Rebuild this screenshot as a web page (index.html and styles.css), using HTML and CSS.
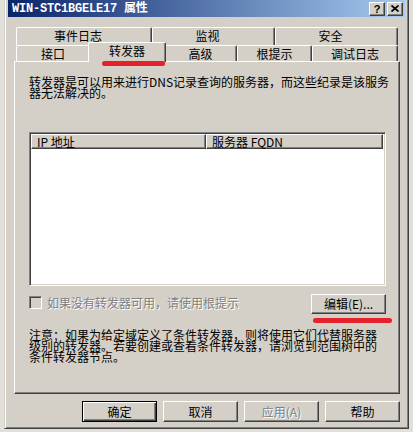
FILE: index.html
```html
<!DOCTYPE html>
<html>
	<head>
		<meta charset="utf-8">
		<title>WIN-STC1BGELE17 属性</title>

		<link rel="stylesheet" href="styles.css">

	</head>

	<body>
		<div id="dialog">
			<div id="titleBar">
				<span class="title">WIN-STC1BGELE17 属性</span>
				<span class="capBtn help">?</span>
				<span class="capBtn">
					<svg width="8" height="7" viewBox="0 0 8 7"><path d="M0.5 0.5 L7.5 6.5 M7.5 0.5 L0.5 6.5" stroke="#000" stroke-width="1.7" fill="none"/></svg>
				</span>
			</div>

			<div id="content">
				<div id="tabs">
					<div class="tabRow back">
						<span class="tab">事件日志</span>
						<span class="tab">监视</span>
						<span class="tab">安全</span>
					</div>
					<div class="tabRow front">
						<span class="tab">接口</span>
						<span class="tab on">转发器</span>
						<span class="tab">高级</span>
						<span class="tab">根提示</span>
						<span class="tab">调试日志</span>
					</div>
					<i class="mark markTab"></i>
				</div>

				<div id="panel">
					<p class="desc">转发器是可以用来进行DNS记录查询的服务器，而这些纪录是该服务器无法解决的。</p>

					<div class="listView">
						<div class="listHead">
							<span class="col colIp">IP 地址</span>
							<span class="col colFqdn">服务器 FQDN</span>
						</div>
						<div class="listBody"></div>
					</div>

					<div class="optRow">
						<label class="check disabled"><span class="box"></span>如果没有转发器可用，请使用根提示</label>
						<span class="btn editBtn">编辑(E)...<i class="mark markEdit"></i></span>
					</div>

					<p class="note">注意：如果为给定域定义了条件转发器，则将使用它们代替服务器级别的转发器。若要创建或查看条件转发器，请浏览到范围树中的条件转发器节点。</p>
				</div>

				<div id="buttons">
					<span class="btn default">确定</span>
					<span class="btn">取消</span>
					<span class="btn disabled">应用(A)</span>
					<span class="btn">帮助</span>
				</div>
			</div>
		</div>
	</body>
</html>
```

FILE: styles.css
```css
* {
	margin: 0;
	padding: 0;
	box-sizing: border-box;
}
body {
	background-color: #e2e0db;
	font-family: "Noto Sans CJK SC", sans-serif;
	font-size: 12px;
	color: #000;
}
#dialog {
	width: 405px;
	height: 433px;
	margin: -4px 0 0 4px;
	background: #d4d0c8;
	border: 1px solid;
	border-color: #d4d0c8 #404040 #404040 #d4d0c8;
	box-shadow: inset 1px 1px #fff, inset -1px -1px #808080;
	padding: 3px;
}
#titleBar {
	height: 17px;
	display: flex;
	align-items: center;
	gap: 2px;
	padding: 0 2px;
	background: linear-gradient(to right, #0a246a, #a6caf0);
}
#titleBar .title {
	flex: 1;
	padding: 1px 0 0 2px;
	color: #fff;
	font-family: "Liberation Mono", "Noto Sans CJK SC", monospace;
	font-weight: bold;
	font-size: 12px;
	letter-spacing: -0.2px;
	line-height: 16px;
}
.capBtn {
	width: 16px;
	height: 14px;
	display: flex;
	align-items: center;
	justify-content: center;
	background: #d4d0c8;
	border: 1px solid;
	border-color: #fff #404040 #404040 #fff;
	box-shadow: inset -1px -1px #808080;
}
.capBtn.help {
	font-family: "Liberation Sans", sans-serif;
	font-weight: bold;
	font-size: 11px;
	line-height: 12px;
}

#content {
	padding: 10px 5px 0 6px;
}

/* tabs */
#tabs {
	position: relative;
}
.tabRow {
	display: grid;
	margin: 0 2px;
}
.tabRow.back {
	height: 18px;
	grid-template-columns: 136px 123px 123px;
}
.tabRow.front {
	height: 16px;
	grid-template-columns: 74px 74px 73px 75px 86px;
}
.tab {
	display: flex;
	align-items: center;
	justify-content: center;
	background: #d4d0c8;
	border-top: 1px solid #fff;
	border-left: 1px solid #fff;
	border-right: 1px solid #404040;
	border-radius: 2px 2px 0 0;
	box-shadow: inset -1px 0 #808080;
	line-height: 14px;
}
.tabRow.back .tab {
	padding-right: 12px;
	padding-bottom: 1px;
}
.tab.on {
	margin: -3px -2px -1px;
	padding-bottom: 3px;
	z-index: 2;
}
.mark {
	position: absolute;
	display: block;
	height: 5px;
	border-radius: 3px;
	background: #e3222b;
}
.markTab {
	left: 88px;
	top: 34px;
	width: 63px;
	z-index: 3;
}

/* page */
#panel {
	height: 333px;
	padding: 14px 13px 0 14px;
	border: 1px solid;
	border-color: #fff #404040 #404040 #fff;
	box-shadow: inset -1px -1px #808080;
}
.desc {
	width: 366px;
	line-height: 11px;
}
.listView {
	margin-top: 34px;
	height: 154px;
	border: 1px solid;
	border-color: #808080 #fff #fff #808080;
	box-shadow: inset 1px 1px #404040, inset -1px -1px #d4d0c8;
	padding: 1px;
	background: #fff;
}
.listHead {
	display: flex;
	height: 15px;
}
.col {
	background: #d4d0c8;
	border: 1px solid;
	border-color: #fff #404040 #404040 #fff;
	box-shadow: inset -1px -1px #808080;
	padding: 1px 0 0 5px;
	line-height: 12px;
}
.colIp {
	width: 175px;
}
.colFqdn {
	width: 177px;
}

.optRow {
	margin-top: 7px;
	height: 21px;
	display: flex;
	align-items: center;
	justify-content: space-between;
}
.check {
	display: flex;
	align-items: center;
	gap: 5px;
	margin-top: -2px;
}
.check .box {
	width: 13px;
	height: 13px;
	border: 1px solid;
	border-color: #808080 #fff #fff #808080;
	box-shadow: inset 1px 1px #404040, inset -1px -1px #d4d0c8;
	background: #d4d0c8;
}
.check.disabled {
	color: #808080;
	text-shadow: 1px 1px #fff;
}

.btn {
	width: 75px;
	height: 21px;
	display: flex;
	align-items: center;
	justify-content: center;
	border: 1px solid;
	border-color: #fff #404040 #404040 #fff;
	box-shadow: inset -1px -1px #808080;
	background: #d4d0c8;
	line-height: 14px;
}
.editBtn {
	position: relative;
	height: 20px;
}
.markEdit {
	left: 1px;
	top: 23px;
	width: 79px;
}
.btn.default {
	border-color: #000;
	box-shadow: inset 1px 1px #fff, inset -1px -1px #404040, inset -2px -2px #808080;
}
.btn.disabled {
	color: #808080;
	text-shadow: 1px 1px #fff;
}

.note {
	margin-top: 15px;
	width: 352px;
	line-height: 11px;
}

#buttons {
	margin-top: 7px;
	display: flex;
	justify-content: flex-end;
	gap: 6px;
}
```
